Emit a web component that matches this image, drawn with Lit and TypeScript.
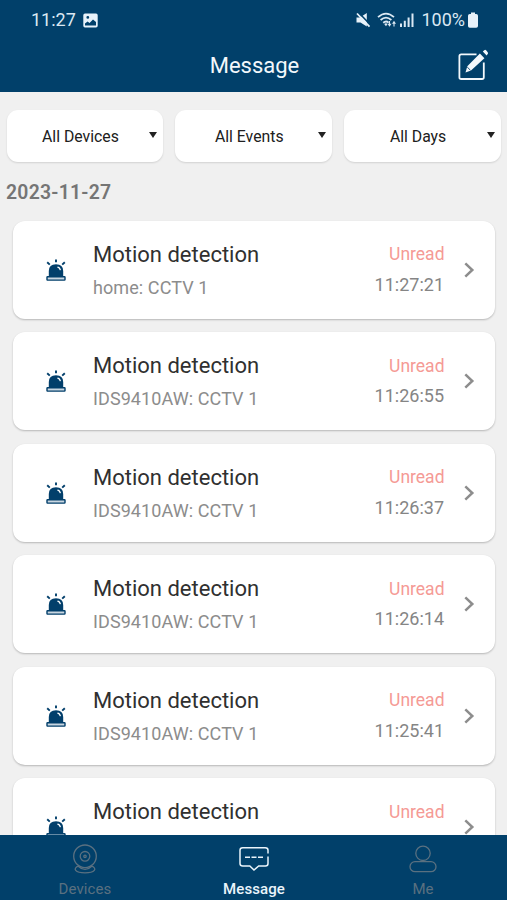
import { LitElement, html, css, svg } from "lit";
import { customElement, property } from "lit/decorators.js";
import { classMap } from "lit/directives/class-map.js";

interface Message {
  title: string;
  source: string;
  time: string;
}

const messages: Message[] = [
  { title: "Motion detection", source: "home: CCTV 1", time: "11:27:21" },
  { title: "Motion detection", source: "IDS9410AW: CCTV 1", time: "11:26:55" },
  { title: "Motion detection", source: "IDS9410AW: CCTV 1", time: "11:26:37" },
  { title: "Motion detection", source: "IDS9410AW: CCTV 1", time: "11:26:14" },
  { title: "Motion detection", source: "IDS9410AW: CCTV 1", time: "11:25:41" },
  { title: "Motion detection", source: "", time: "" },
];

@customElement("status-bar")
export class StatusBar extends LitElement {
  static styles = css`
    :host { display: flex; align-items: center; height: 40px; padding: 0 29px 0 31px; color: #dbe8f3; font-size: 18px; line-height: 40px; }
    svg { display: block; flex: none; }
    .clock { width: 52px; }
    .spacer { flex: 1; }
    .mute { margin-right: 6px; }
    .wifi { margin-right: 3px; }
    .bars { margin-right: 7px; }
    .battery { margin-left: 3px; }
  `;
  render() {
    return html`
      <span class="clock">11:27</span>
      <svg width="15" height="15" viewBox="0 0 15 15">
        <path fill="#e8f2fa" fill-rule="evenodd" d="M2 .5H13Q14.7 .5 14.7 2.2V12.8Q14.7 14.5 13 14.5H2Q.3 14.5 .3 12.8V2.2Q.3 .5 2 .5ZM2 10.6V12.4H13V9L10 6.4L6.5 10L4.6 8.4ZM4.8 3A1.4 1.4 0 1 0 4.8 5.8A1.4 1.4 0 1 0 4.8 3Z" />
      </svg>
      <span class="spacer"></span>
      <svg class="mute" width="15" height="16" viewBox="0 0 15 16">
        <path fill="#e8f2fa" d="M.5 5.5H4L10.8 1V14.5L4.5 10.5H.5Z" />
        <path stroke="#01406a" stroke-width="1.6" d="M2.5 .5L15 13.5" />
        <path stroke="#e8f2fa" stroke-width="1.8" d="M1 1.5L13.5 14.7" />
      </svg>
      <svg class="wifi" width="20" height="16" viewBox="0 0 20 16" fill="none" stroke="#dbe8f3" stroke-width="1.8">
        <path d="M1 5.2Q9 -2 17 5.2M3.6 8Q9 3.2 14.4 8M6.2 10.8Q9 8.4 11.6 10.6" />
        <path fill="#dbe8f3" stroke="none" d="M7.2 12.1Q9 10.6 10.6 12.1L9 14.2ZM10.5 11.8H14.5L12.5 14.8ZM15 11.8H19L17 8.8Z" />
        <path stroke-width="1.1" d="M12.5 9V12M17 11V14.4" />
      </svg>
      <svg class="bars" width="14" height="14" viewBox="0 0 14 14" fill="#dbe8f3">
        <path d="M0 10.5H2V14H0ZM3.8 7.8H5.8V14H3.8ZM7.6 4.5H9.6V14H7.6ZM11.5 .5H13.5V14H11.5Z" />
      </svg>
      <span>100%</span>
      <svg class="battery" width="10" height="16" viewBox="0 0 10 16" fill="#e8f2fa">
        <path d="M3 .5H7V2H8.2Q10 2 10 3.8V14Q10 15.8 8.2 15.8H1.8Q0 15.8 0 14V3.8Q0 2 1.8 2H3Z" />
      </svg>
    `;
  }
}

@customElement("filter-select")
export class FilterSelect extends LitElement {
  @property() label = "";
  static styles = css`
    :host { display: flex; align-items: center; box-sizing: border-box; height: 51.5px; padding-right: 6px; border-radius: 11px; background: #fff; box-shadow: 0 1px 2px rgba(0, 0, 0, 0.13); color: #202020; font-size: 15.8px; }
    .label { flex: 1; padding: 1px 0 0 5px; text-align: center; white-space: nowrap; }
    svg { display: block; margin-bottom: 1px; }
  `;
  render() {
    return html`
      <span class="label">${this.label}</span>
      <svg width="8" height="6" viewBox="0 0 8 6"><path fill="#222" d="M0 0H8L4 6Z" /></svg>
    `;
  }
}

@customElement("message-card")
export class MessageCard extends LitElement {
  @property({ attribute: false }) message!: Message;
  static styles = css`
    :host { display: flex; box-sizing: border-box; height: 98px; padding: 0 20px 0 33px; border-radius: 12px; background: #fff; box-shadow: 0 1px 2px rgba(0, 0, 0, 0.24); white-space: nowrap; }
    svg { display: block; flex: none; }
    .alarm { margin: 38px 27px 0 0; }
    .text { flex: 1; display: flex; flex-direction: column; }
    .title { margin-top: 18px; font-size: 22px; line-height: 32px; color: #303030; }
    .source { margin-top: 3px; font-size: 18px; line-height: 28px; letter-spacing: 0.09px; color: #8c8c8c; }
    .meta { display: flex; flex-direction: column; align-items: flex-end; padding-right: 18.5px; }
    .unread { margin-top: 19.5px; font-size: 17.5px; line-height: 28px; color: #f59a95; }
    .time { margin-top: 2.8px; padding-right: 0.5px; font-size: 18px; line-height: 28px; color: #858585; }
    .chevron { margin-top: 41.3px; }
  `;
  render() {
    return html`
      <svg class="alarm" width="20" height="23" viewBox="0 0 20 23">
        <path fill="#023f6b" d="M2.8 17.4V12Q2.8 5.2 10 5.2T17.2 12V17.4Z" />
        <path fill="none" stroke="#023f6b" stroke-width="1.9" d="M10 .6V3.3M1.2 3.2L3.8 5.6M18.8 3.2L16.2 5.6" />
        <rect x="1" y="17.7" width="18" height="3.4" rx=".6" fill="#c9d6e1" stroke="#023f6b" stroke-width="1.4" />
        <path fill="none" stroke="#fff" stroke-width="1.4" stroke-linecap="round" d="M11.9 8.2Q13.7 8.8 14.2 10.6" />
      </svg>
      <div class="text">
        <span class="title">${this.message.title}</span>
        <span class="source">${this.message.source}</span>
      </div>
      <div class="meta">
        <span class="unread">Unread</span>
        <span class="time">${this.message.time}</span>
      </div>
      <svg class="chevron" width="12" height="16" viewBox="0 0 12 16">
        <path fill="none" stroke="#8d8d8d" stroke-width="2.5" d="M2.3 1.3L9.3 8L2.3 14.7" />
      </svg>
    `;
  }
}

const tabs = [
  {
    label: "Devices",
    icon: svg`<circle cx="15" cy="12.3" r="11.3"/><circle cx="15" cy="12.3" r="4.8"/><circle cx="15" cy="12.3" r="1.2"/><path d="M8.2 22.2C2.5 24.5 5 28.8 15 28.8S27.5 24.5 21.8 22.2M8.2 22.2Q15 28.6 21.8 22.2"/>`,
  },
  {
    label: "Message",
    icon: svg`<path stroke-width="1.5" d="M29 12.5V19.5Q29 22 26.5 22H19.7L15 26.1L10.8 22H3.7Q1 22 1 19.5V6.2Q1 3.7 3.7 3.7H26.3Q29 3.7 29 6.2V9.5"/><path stroke-width="1.5" d="M6 13.3H11M12.5 13.3H17.5M19 13.3H24"/>`,
  },
  {
    label: "Me",
    icon: svg`<circle cx="15" cy="9.3" r="7.2"/><rect x="2" y="17.7" width="26" height="10" rx="5"/>`,
  },
];

@customElement("tab-bar")
export class TabBar extends LitElement {
  @property() selected = "Message";
  static styles = css`
    :host { display: grid; grid-template-columns: repeat(3, 1fr); height: 65.5px; background: #01406a; }
    .tab { display: flex; flex-direction: column; align-items: center; padding-top: 9.5px; color: #5a7080; font-size: 15px; line-height: 20px; }
    .active { color: #eaf4fb; font-weight: 500; }
    svg { display: block; }
    .label { margin: 4.5px 0 0 1px; letter-spacing: 0.1px; }
  `;
  render() {
    return tabs.map(
      (tab) => html`
        <div class=${classMap({ tab: true, active: tab.label === this.selected })}>
          <svg width="30" height="30" viewBox="0 0 30 30" fill="none" stroke="currentColor" stroke-width="1.3">${tab.icon}</svg>
          <span class="label">${tab.label}</span>
        </div>
      `,
    );
  }
}

@customElement("app-root")
export class AppRoot extends LitElement {
  static styles = css`
    :host { display: flex; flex-direction: column; height: 900px; overflow: hidden; background: #f0f0f0; font-family: Roboto, "Liberation Sans", sans-serif; }
    header { flex: none; height: 91.5px; background: #01406a; }
    .titlebar { display: grid; grid-template-columns: 1fr auto 1fr; align-items: center; height: 51px; padding: 0 18px 0 20px; }
    h1 { grid-column: 2; margin: 0; font-size: 22px; font-weight: 400; line-height: 51px; color: #f3f8fc; }
    .edit { display: block; justify-self: end; margin-bottom: 1px; }
    .filters { flex: none; display: grid; grid-template-columns: repeat(3, 1fr); gap: 12px; padding: 18.5px 6px 0 6.5px; }
    .date { flex: none; margin: 18px 0 0 6px; font-size: 19.4px; font-weight: 600; line-height: 26px; letter-spacing: 0.25px; color: #757575; }
    main { flex: 1; min-height: 0; overflow: hidden; display: flex; flex-direction: column; gap: 13.5px; padding: 15px 12px 0 13px; }
    message-card { flex: none; }
    tab-bar { flex: none; }
  `;
  render() {
    return html`
      <header>
        <status-bar></status-bar>
        <div class="titlebar">
          <h1>Message</h1>
          <svg class="edit" width="31" height="32" viewBox="0 0 31 32">
            <path fill="none" stroke="#f3f8fc" stroke-width="1.8" d="M18.5 5.4H3.2Q1.4 5.4 1.4 7.2V28.2Q1.4 30 3.2 30H24Q25.8 30 25.8 28.2V13.5" />
            <path fill="#f3f8fc" d="M21.9 4.6L26.4 9.2L13 21.5L7.5 23.6L9.3 17.2ZM24.8 2.6L26.3 1.2Q27.2 .4 28.1 1.3L29.7 3.2Q30.5 4.3 29.7 5.1L28.6 6.4Z" />
            <path stroke="#01406a" stroke-width=".9" d="M9.2 18L12.4 21.2" />
          </svg>
        </div>
      </header>
      <div class="filters">
        <filter-select label="All Devices"></filter-select>
        <filter-select label="All Events"></filter-select>
        <filter-select label="All Days"></filter-select>
      </div>
      <div class="date">2023-11-27</div>
      <main>${messages.map((m) => html`<message-card .message=${m}></message-card>`)}</main>
      <tab-bar></tab-bar>
    `;
  }
}
